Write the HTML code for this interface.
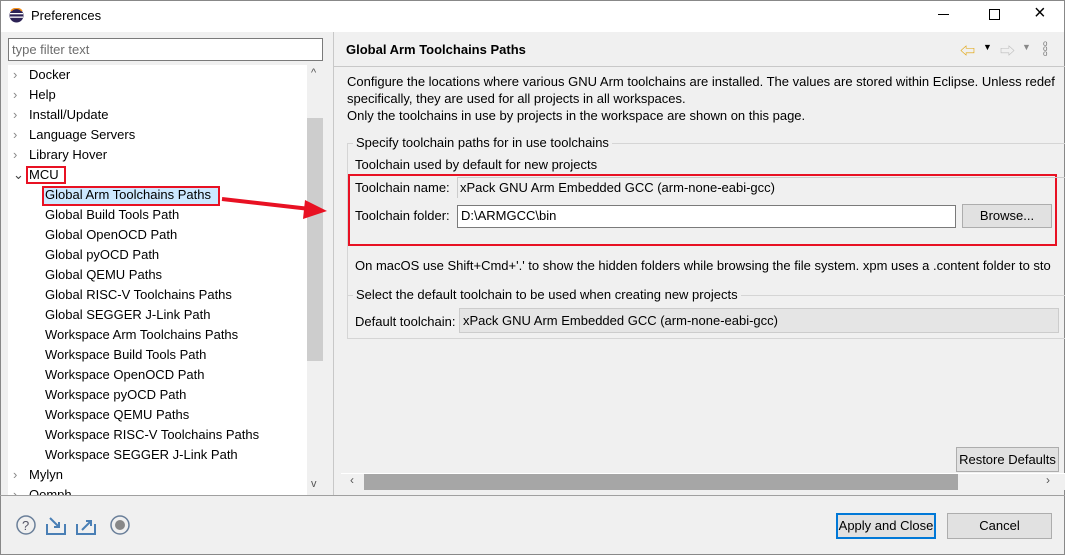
<!DOCTYPE html><html><head><style>
*{margin:0;padding:0;box-sizing:border-box}
body{width:1065px;height:555px;background:#f0f0f0;font-family:"Liberation Sans","Noto Sans CJK SC",sans-serif;font-size:13px;color:#000;position:relative;overflow:hidden}
.a{position:absolute;white-space:nowrap}
.t{position:absolute;white-space:nowrap;line-height:20px}
</style></head><body>
<div class="a" style="left:0;top:0;width:1065px;height:32px;background:#fff;border:1px solid #888;border-bottom:none"></div>
<svg class="a" style="left:9px;top:8px" width="15" height="15"><circle cx="7.5" cy="7.5" r="7" fill="#2c2255"/><rect x="1" y="5" width="13" height="1.3" fill="#fff"/><rect x="1" y="8.5" width="13" height="1.3" fill="#fff"/><path d="M2 3 A7 7 0 0 1 13 3" stroke="#f7941e" stroke-width="1.5" fill="none"/></svg>
<div class="a" style="left:31px;top:8px">Preferences</div>
<div class="a" style="left:938px;top:14px;width:11px;height:1px;background:#000"></div>
<div class="a" style="left:989px;top:9px;width:11px;height:11px;border:1px solid #000"></div>
<div class="a" style="left:1034px;top:2px;font-size:20px;font-weight:300">×</div>
<div class="a" style="left:0;top:32px;width:1px;height:523px;background:#888"></div>
<div class="a" style="left:1064px;top:32px;width:1px;height:523px;background:#888"></div>
<div class="a" style="left:0;top:554px;width:1065px;height:1px;background:#888"></div>
<!-- left -->
<div class="a" style="left:8px;top:38px;width:315px;height:23px;background:#fff;border:1px solid #7a7a7a"></div>
<div class="a" style="left:12px;top:42px;color:#6d6d6d">type filter text</div>
<div class="a" style="left:8px;top:65px;width:315px;height:430px;background:#fff;overflow:hidden">
<div style="position:absolute;left:299px;top:0;width:16px;height:430px;background:#f0f0f0"></div>
<div style="position:absolute;left:299px;top:53px;width:16px;height:243px;background:#cdcdcd"></div>
<div style="position:absolute;left:303px;top:2px;color:#555;font-size:11px">^</div>
<div style="position:absolute;left:303px;top:413px;color:#555;font-size:11px">v</div>
<div class="t" style="left:5px;top:0;color:#888">›</div><div class="t" style="left:21px;top:0">Docker</div>
<div class="t" style="left:5px;top:20px;color:#888">›</div><div class="t" style="left:21px;top:20px">Help</div>
<div class="t" style="left:5px;top:40px;color:#888">›</div><div class="t" style="left:21px;top:40px">Install/Update</div>
<div class="t" style="left:5px;top:60px;color:#888">›</div><div class="t" style="left:21px;top:60px">Language Servers</div>
<div class="t" style="left:5px;top:80px;color:#888">›</div><div class="t" style="left:21px;top:80px">Library Hover</div>
<div class="t" style="left:5px;top:100px;color:#444">⌄</div><div class="t" style="left:21px;top:100px">MCU</div>
<div style="position:absolute;left:18px;top:101px;width:40px;height:18px;border:2px solid #e81123"></div>
<div style="position:absolute;left:34px;top:121px;width:178px;height:20px;background:#cce8ff;border:2px solid #e81123"></div>
<div class="t" style="left:37px;top:120px">Global Arm Toolchains Paths</div>
<div class="t" style="left:37px;top:140px">Global Build Tools Path</div>
<div class="t" style="left:37px;top:160px">Global OpenOCD Path</div>
<div class="t" style="left:37px;top:180px">Global pyOCD Path</div>
<div class="t" style="left:37px;top:200px">Global QEMU Paths</div>
<div class="t" style="left:37px;top:220px">Global RISC-V Toolchains Paths</div>
<div class="t" style="left:37px;top:240px">Global SEGGER J-Link Path</div>
<div class="t" style="left:37px;top:260px">Workspace Arm Toolchains Paths</div>
<div class="t" style="left:37px;top:280px">Workspace Build Tools Path</div>
<div class="t" style="left:37px;top:300px">Workspace OpenOCD Path</div>
<div class="t" style="left:37px;top:320px">Workspace pyOCD Path</div>
<div class="t" style="left:37px;top:340px">Workspace QEMU Paths</div>
<div class="t" style="left:37px;top:360px">Workspace RISC-V Toolchains Paths</div>
<div class="t" style="left:37px;top:380px">Workspace SEGGER J-Link Path</div>
<div class="t" style="left:5px;top:400px;color:#888">›</div><div class="t" style="left:21px;top:400px">Mylyn</div>
<div class="t" style="left:5px;top:420px;color:#888">›</div><div class="t" style="left:21px;top:420px">Oomph</div>
</div>
<div class="a" style="left:333px;top:32px;width:1px;height:463px;background:#c8c8c8"></div>
<!-- right -->
<div class="a" style="left:346px;top:42px;font-weight:bold">Global Arm Toolchains Paths</div>
<div class="a" style="left:960px;top:40px;color:#e0a000;font-size:15px">⇦</div><div class="a" style="left:983px;top:42px;font-size:9px">▼</div>
<div class="a" style="left:1000px;top:40px;color:#bbb;font-size:15px">⇨</div><div class="a" style="left:1022px;top:42px;font-size:9px;color:#888">▼</div>
<div class="a" style="left:1043px;top:41px;font-size:8px;line-height:5px;color:#777">o<br>o<br>o</div>
<div class="a" style="left:334px;top:66px;width:731px;height:1px;background:#c8c8c8"></div>
<div class="a" style="left:347px;top:73px;line-height:17px">Configure the locations where various GNU Arm toolchains are installed. The values are stored within Eclipse. Unless redef<br>specifically, they are used for all projects in all workspaces.<br>Only the toolchains in use by projects in the workspace are shown on this page.</div>
<div class="a" style="left:347px;top:143px;width:718px;height:196px;border:1px solid #d5d5d5;border-right:none"></div>
<div class="a" style="left:353px;top:135px;background:#f0f0f0;padding:0 3px">Specify toolchain paths for in use toolchains</div>
<div class="a" style="left:355px;top:157px">Toolchain used by default for new projects</div>
<div class="a" style="left:348px;top:174px;width:709px;height:72px;border:2px solid #e81123"></div>
<div class="a" style="left:355px;top:180px">Toolchain name:</div>
<div class="a" style="left:457px;top:177px;width:608px;height:21px;border-left:1px solid #ccc;border-top:1px solid #ccc"></div>
<div class="a" style="left:460px;top:180px">xPack GNU Arm Embedded GCC (arm-none-eabi-gcc)</div>
<div class="a" style="left:355px;top:208px">Toolchain folder:</div>
<div class="a" style="left:457px;top:205px;width:499px;height:23px;background:#fff;border:1px solid #7a7a7a"></div>
<div class="a" style="left:461px;top:208px">D:\ARMGCC\bin</div>
<div class="a" style="left:962px;top:204px;width:90px;height:24px;background:#e1e1e1;border:1px solid #adadad;text-align:center;line-height:22px">Browse...</div>
<div class="a" style="left:355px;top:258px">On macOS use Shift+Cmd+'.' to show the hidden folders while browsing the file system. xpm uses a .content folder to sto</div>
<div class="a" style="left:347px;top:295px;width:718px;height:44px;border-top:1px solid #d5d5d5"></div>
<div class="a" style="left:353px;top:287px;background:#f0f0f0;padding:0 3px">Select the default toolchain to be used when creating new projects</div>
<div class="a" style="left:355px;top:314px">Default toolchain:</div>
<div class="a" style="left:459px;top:308px;width:600px;height:25px;background:#e5e5e5;border:1px solid #ccc"></div>
<div class="a" style="left:463px;top:313px">xPack GNU Arm Embedded GCC (arm-none-eabi-gcc)</div>
<div class="a" style="left:956px;top:447px;width:103px;height:25px;background:#e1e1e1;border:1px solid #adadad;text-align:center;line-height:23px">Restore Defaults</div>
<div class="a" style="left:341px;top:473px;width:724px;height:17px;background:#f0f0f0;border-top:1px solid #fff"></div>
<div class="a" style="left:364px;top:474px;width:594px;height:16px;background:#a6a6a6"></div>
<div class="a" style="left:350px;top:473px;color:#555;font-size:12px">‹</div>
<div class="a" style="left:1046px;top:473px;color:#555;font-size:12px">›</div>
<div class="a" style="left:0;top:495px;width:1065px;height:1px;background:#a0a0a0"></div>
<!-- bottom icons -->
<svg class="a" style="left:16px;top:514px" width="115" height="24">
<circle cx="10" cy="11" r="9" fill="none" stroke="#6a7f99" stroke-width="1.5"/><text x="6" y="16" font-size="13" fill="#556" font-family="Liberation Sans">?</text>
<path d="M31 10v10h18v-10" fill="none" stroke="#4a7fb5" stroke-width="2"/><path d="M34 4l9 9m0-5v5h-5" fill="none" stroke="#4a7fb5" stroke-width="2"/>
<path d="M61 10v10h18v-10" fill="none" stroke="#4a7fb5" stroke-width="2"/><path d="M66 16l9-9m-5 0h5v5" fill="none" stroke="#4a7fb5" stroke-width="2"/>
<circle cx="104" cy="11" r="9" fill="none" stroke="#6a7f99" stroke-width="1.5"/><circle cx="104" cy="11" r="5" fill="#888"/>
</svg>
<div class="a" style="left:836px;top:513px;width:100px;height:26px;background:#e1e1e1;border:2px solid #0078d7;text-align:center;line-height:22px">Apply and Close</div>
<div class="a" style="left:947px;top:513px;width:105px;height:26px;background:#e1e1e1;border:1px solid #adadad;text-align:center;line-height:24px">Cancel</div>
<!-- red arrow -->
<svg class="a" style="left:215px;top:190px" width="120" height="35"><path d="M7 9 L95 19" stroke="#e81123" stroke-width="4"/><path d="M112 21 L90 10 L88 29 Z" fill="#e81123"/></svg>
</body></html>
